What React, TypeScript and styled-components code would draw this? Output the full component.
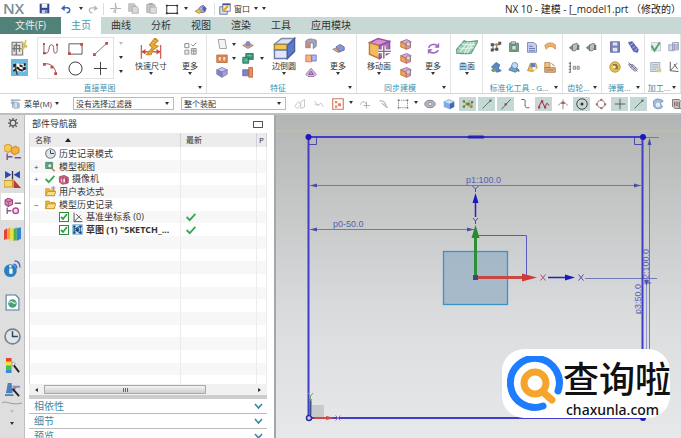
import React, { ReactNode } from 'react';
import styled, { createGlobalStyle, css } from 'styled-components';

const uiFont = '"Open Sans", "Noto Sans CJK SC", sans-serif';

const GlobalStyle = createGlobalStyle`
  * { box-sizing: border-box; }
  body { margin: 0; background: #fff; }
  button, select { font: inherit; color: inherit; }
`;

/* ---------- icon drawings, all on a 16 x 16 grid ---------- */

const line = (d: string, stroke: string, w = 1.2) => (
  <path d={d} fill="none" stroke={stroke} strokeWidth={w} />
);
const shape = (d: string, fill: string, stroke = 'none') => (
  <path d={d} fill={fill} stroke={stroke} />
);
const isoBox = (top: string, left: string, right: string) => (
  <>
    {shape('M1 5 8 2l7 3-7 3z', top, '#7a7aa8')}
    {shape('M1 5v6l7 4V8z', left, '#7a7aa8')}
    {shape('M15 5v6l-7 4V8z', right, '#7a7aa8')}
  </>
);

const art: Record<string, ReactNode> = {
  save: <>{shape('M1 1h14v14H1z', '#36468c')}{shape('M4 1h8v6H4z', '#eef1fa')}{shape('M4 10h8v5H4z', '#c4cbe6')}{shape('M9 11h2v3H9z', '#36468c')}</>,
  undo: <>{line('M4 6h6c3 0 4 2 4 4s-2 4-5 4', '#3b68b5', 2.2)}{shape('M0 7 6 1v10z', '#3b68b5')}</>,
  redo: <>{line('M12 6H6c-3 0-4 2-4 4s2 4 5 4', '#b9b9b9', 2)}{shape('M16 7 10 2v9z', '#b9b9b9')}</>,
  cut: <>{line('M8 0v15M0 8h16', '#b4b4b4', 1.8)}{line('M5 14 10 5', '#c4c4c4', 2)}</>,
  copy: <>{shape('M1 1h8l2 3v8H1z', '#c9c9c9', '#a9a9a9')}{shape('M6 5h7l2 3v7H6z', '#d9d9d9', '#a2a2a2')}</>,
  paste: <>{shape('M1 2h12v12H1z', '#c4c4c4', '#a9a9a9')}{shape('M4 0h6v3H4z', '#a9a9a9')}{shape('M6 6h9v9H6z', '#dcdcdc', '#a9a9a9')}</>,
  rectTool: <>{line('M2 4h12v9H2z', '#444', 1.2)}{shape('M1 3h2v2H1zM13 3h2v2h-2zM1 12h2v2H1zM13 12h2v2h-2z', '#333')}</>,
  sweep: <>{shape('M3 11 7 5l4-2 4 4-2 5-5 1z', '#a9b0e2', '#54559b')}{shape('M0 11 5 8l4 3-3 3z', '#e3bd5b', '#a98a3a')}{shape('M10 4l5 3-2 5-3-3z', '#5361b4')}</>,
  window: <>{shape('M1 5h10v10H1z', '#d7dff5', '#4c5791')}{shape('M5 1h10v10H5z', '#f2f3fb', '#4c5791')}{line('M5 11 12 4', '#e0a920', 3)}{shape('M5 1h10v2H5z', '#4c5791')}</>,
  sketchNew: <>{shape('M1 3h10v12H1z', '#e6e6e4', '#777')}{line('M3 12V6h5v6M5 3v12M1 9h10', '#777')}{line('M9 10l6-4M10 3l5 5M14 1l-2 8', '#d9bd4a', 1.5)}</>,
  finish: <>{shape('M0 0h16v16H0z', '#6db9e4')}{shape('M2 5c4-3 7 2 12-1v7c-5 3-8-2-12 1z', '#fff')}{shape('M2 5 5 4v3l-3 1zM8 5l3 1v2L8 7zM5 7l3 1v3L5 9zM11 8l3-1v3l-3 1zM2 10l3-1v2l-3 1zM8 9l3 1v2l-3-1zM12 4l2 0v2l-2 1z', '#222')}{line('M3 5 6 15', '#333')}</>,
  profile: <>{line('M1 3v10M3 13c5 0 2-9 6-9s1 9 4 9 2-4 2-9', '#8b5050', 1)}{shape('M0 2h2v2H0zM0 12h3v2H0zM14 3h2v2h-2z', '#b03a36')}</>,
  rectangle: <>{line('M1 3h14v11H1z', '#555', 1)}{shape('M0 12h3v3H0zM13 2h3v3h-3z', '#bd4f47')}</>,
  lineTool: <>{line('M2 14 14 3', '#777', 1)}{shape('M0 13h3v3H0zM13 1h3v3h-3z', '#bd4f47')}</>,
  arc: <>{line('M1 3c8-1 12 4 13 11', '#8b5050', 1)}{shape('M0 2h3v3H0zM8 5h3v3H8zM12 12h3v3h-3z', '#bd4f47')}</>,
  circle: <circle cx="8" cy="8" r="7" fill="none" stroke="#333" />,
  plus: line('M8 1v14M1 8h14', '#3b3b3b', 1),
  dimension: <>{line('M1 5v10M15 5v10M1 10h14', '#d0655e', 1)}{shape('M1 10l3-2v4zM15 10l-3-2v4z', '#d0453f')}{shape('M5 12 9 7 7 5l4-5 2 2-3 3 3 1-4 3-1 3z', '#edb145', '#cf8e2b')}</>,
  more: <>{line('M1 2h5v5H1zM9 3l2 2 4-4', '#888')}{shape('M1 10h5v5H1zM9 8h6v7H9z', '#e8e8e8', '#888')}{line('M12 8v7M9 11h6', '#888', 1)}</>,
  plane: shape('M3 2h9l2 12H5z', '#f4f4f6', '#888'),
  extrude: <>{shape('M1 4h14v10H1z', '#e7935c', '#b65c2c')}{shape('M3 6h4v6H3zM9 6h4v6H9z', '#fae0bf', '#c36e3f')}</>,
  block: isoBox('#c6c3ee', '#8580c9', '#a49fdd'),
  hole: <>{shape('M1 10 8 6l7 4-7 4z', '#dba66b', '#8c7c91')}{shape('M5 7c0-4 6-4 6 0v4H5z', '#8487c8')}</>,
  unite: <>{shape('M5 2h10v8H5z', '#399477', '#1c6f56')}{shape('M1 7h8v8H1z', '#46a283', '#1c6f56')}{line('M7 5h6M4 11h3', '#9ad3bf')}</>,
  trim: <>{shape('M1 5h8v8H1z', '#7f83ce', '#555ba5')}{shape('M9 2h5v13H9z', '#e89056', '#b65c2c')}</>,
  blend: <>{shape('M1 5 6 1h9l-5 5H1z', '#d8e1f5', '#7d8aa8')}{shape('M1 5h9v4H1z', '#f1c64b', '#9f8740')}{shape('M1 9h9v6H1z', '#dfe7f8', '#6b7cad')}{shape('M10 6 15 1v9l-5 5z', '#5c7bcb', '#4a63a5')}</>,
  draft: <>{shape('M1 4c4-4 9-3 14-1v8l-4 3V7L7 6v7H1z', '#a5a3bd', '#74728e')}{shape('M2 6h4v6H2z', '#d08a68')}</>,
  shell: <>{shape('M1 4h8v9H1z', '#f2b186', '#d8683b')}{shape('M9 4h6v8H9z', '#b5bce8', '#6167b5')}</>,
  offset: <>{shape('M1 11 8 3l7 8-3 3H4z', '#dab5dd', '#8d6199')}{line('M5 11 8 7l3 4z', '#6d4b83')}</>,
  feature: <>{shape('M1 9 8 6l7 3-7 4z', '#e2a35c', '#8a7a87')}{shape('M5 6l5-3 5 3v4l-6 2z', '#8995d3', '#5c66a5')}</>,
  moveFace: <>{shape('M1 4 7 1l8 2-7 3z', '#d88fd6', '#9155a0')}{shape('M1 4v8l7 3V6z', '#f2bd62', '#c07b39')}{shape('M15 3v8l-7 4V6z', '#b56dc2', '#8c4f9e')}{line('M7 10h9M11 6v9', '#fff', 2.5)}{line('M7 10h9M11 6v9', '#777', 1)}</>,
  face: <>{shape('M1 5 9 2l6 3-6 4z', '#dfa4df', '#9155a0')}{shape('M1 5v7l8 3V9z', '#f1a252', '#b76a33')}{shape('M8 8l6-2v7l-6 2z', '#ef9e91', '#a05379')}<circle cx="11" cy="8" r="3" fill="#d8d4d4" stroke="#777" /></>,
  swap: <>{line('M2 7c2-5 8-5 11-2M14 10c-2 4-8 4-11 2', '#a06bc0', 2)}{shape('M15 1v6H9zM1 15V9h6z', '#a06bc0')}</>,
  surface: <>{shape('M0 9 6 2c3 2 6 0 10 0l-5 9C7 12 5 11 0 11z', '#9fd1b8', '#6c9f88')}{line('M2 7c4 2 7 0 11 0M4 4c4 2 6 0 10 1M6 11l5-8M3 10 9 3M8 11l5-8', '#e1f4ea', 0.8)}</>,
  grid: <>{line('M3 5h10M3 11h8M4 3v10M9 3v10', '#555')}{shape('M1 3h4v4H1zM1 10h4v4H1zM7 9h4v4H7zM11 1h4v4h-4z', '#555')}{shape('M7 3h3v3H7z', '#d9824d')}</>,
  cylinder: <>{shape('M2 3h12v11H2z', '#7fa18f', '#55746a')}{shape('M4 1h6v3H4zM5 6h6v6H5z', '#cfe2d7', '#55746a')}</>,
  list: <>{shape('M2 2h8l4 3v10H2z', '#c6cdea', '#6a72a5')}{line('M4 7h5M4 10h8M4 13h8', '#5f74b0')}</>,
  ribbonIc: shape('M1 6c4-5 10-4 14-1v6l-3-3C8 6 5 8 3 11z', '#f1b16c', '#c58347'),
  partBlue: <>{shape('M2 8l6-6 5 3-2 5 4 3-6 2z', '#5c86c8', '#395d9e')}{shape('M1 12l6-3 2 4-5 2z', '#6fa06b')}</>,
  searchPart: <>{shape('M1 12 7 4l7 8-4 3z', '#72a1b8', '#4b7189')}<circle cx="9" cy="6" r="4" fill="#c5ddf3" stroke="#4c7eb3" />{line('M12 10l3 4', '#4c7eb3', 2)}</>,
  partGold: <>{shape('M2 13 6 3h7l2 6-6 5z', '#edbb56', '#b08432')}{shape('M6 3h6v5H6z', '#6280c0')}<circle cx="11" cy="10" r="2" fill="#fff" /></>,
  tableIc: <>{shape('M1 2h7v7H1z', '#f1bf71', '#b57f3c')}{shape('M1 9h14v6H1z', '#e0c08a', '#a0593f')}{line('M3 12h10', '#a0593f')}{line('M10 3l4 4', '#a0593f')}</>,
  gears: <>{shape('M1 9l5-4v8z', '#7b8787')}{shape('M6 5l6-2 2 4-4 6H6z', '#b6c2be', '#596663')}{shape('M12 5h3v7h-3z', '#66786f')}</>,
  gearMesh: <>{line('M3 1v14M1 3h3M1 7h3M1 11h3M1 15h3', '#666')}{shape('M7 7h3v4H7zM12 7h3v4h-3z', '#dedede', '#777')}</>,
  spring: <>{shape('M2 1h12v14H2z', '#7b83bd', '#565d98')}{shape('M5 2h6v4H5zM5 9h6v5H5z', '#e0e4f6')}</>,
  springDiag: <>{shape('M2 2l5-1 8 10-1 4-5-1z', '#656bbf', '#484e96')}{line('M4 6l4-3M7 10l4-4M10 13l4-3', '#b9bdea')}</>,
  springGold: <><circle cx="8" cy="8" r="7" fill="#e5c253" stroke="#a88a2c" />{shape('M5 4h5l2 3v4H6z', '#8a7947')}<circle cx="7" cy="8" r="2" fill="#fff2bd" /></>,
  springOff: <>{shape('M2 4l6 1 6 6-3 3-7-6z', '#c8c8d7', '#777790')}{line('M5 9l4-4M8 12l4-4M2 2l12 12', '#717193')}</>,
  check: <>{shape('M2 2h12v11H2z', '#ebe8f5', '#c2b9d5')}{line('M2 6l4 7 7-11', '#4aa764', 2.5)}</>,
  sheets: <>{shape('M1 5h7v8H1zM6 2h8v10H6z', '#d5d8e9', '#8e93ae')}{line('M9 4v7M12 4v7', '#8890b2')}</>,
  notebook: <>{shape('M1 2h12v12H1z', '#dce3ec', '#8f98a9')}{line('M3 5h8M3 8h8M3 11h5', '#9aa2b2')}{shape('M9 10h6v5H9z', '#d3cf91')}</>,
  axis: <>{line('M3 1v12l11 1M3 13 12 3M8 4l5 7', '#4f5350')}</>,
  menu: <>{line('M1 3h14M1 7h5M4 3v11', '#91a5ba', 2)}{shape('M6 6h5v9H6z', '#d9e2ec', '#8297ad')}{line('M13 7v8', '#91a5ba', 2)}</>,
  ghostA: <>{line('M1 11l5-6 3 4-4 5zM9 5l5-3v10l-5 2z', '#c4c4c4')}</>,
  ghostB: line('M2 4l5 6M6 10l5-3 3 5M2 8l6 2', '#c4c4c4'),
  snapBox: <>{line('M1 1h14v14H1z', '#d87558', 1.5)}{shape('M4 4h3v3H4zM8 7h4v4H8zM4 10h3v3H4z', '#e0836a')}</>,
  ghostC: <>{line('M2 9c1-6 8-5 8 1M6 10h9M10 5v9', '#ababab')}</>,
  ghostD: <>{line('M2 4c6-1 9 3 9 9M5 7l8 6', '#b5b5b5', 1.5)}</>,
  marquee: <><path d="M2 3h12v10H2z" fill="none" stroke="#777" strokeDasharray="2 1" />{shape('M1 2h2v2H1zM13 2h2v2h-2zM1 12h2v2H1zM13 12h2v2h-2z', '#666')}</>,
  lens: <><ellipse cx="8" cy="8" rx="7" ry="5" fill="#b9b9c5" stroke="#6a6a7c" /><ellipse cx="8" cy="8" rx="3" ry="2" fill="#efefef" stroke="#777" /></>,
  cube: <>{shape('M1 5 8 2l7 3-6 3z', '#c9dffa', '#8aafe0')}{shape('M1 5v7l8 3V8z', '#81a9e4')}{shape('M15 5v7l-6 3V8z', '#3e68b8')}</>,
  points: <>{line('M2 4l4 4-4 4M6 8h8', '#7b8a3b')}{shape('M1 3h3v3H1zM1 10h3v3H1zM6 6h4v4H6zM12 4h3v3h-3zM11 10h3v3h-3z', '#6d7a35')}{shape('M9 9h3v3H9zM9 3h2v2H9z', '#d9913b')}</>,
  segEnd: <>{line('M2 14 13 3', '#4d6e62')}{shape('M11 2h3v3h-3z', '#4d7e68')}</>,
  segMid: <>{line('M2 15 14 2', '#5b4d54')}{shape('M6 7h3v3H6z', '#8e4b55')}</>,
  hook: line('M3 2h4c3 1-1 10 3 11h4', '#555'),
  pole: <>{line('M1 12 5 4l4 8 3-5 3 3', '#a63a56', 1.4)}{shape('M0 11h3v3H0zM4 3h3v3H4zM8 11h3v3H8z', '#a63a56')}</>,
  cross: <>{line('M8 2v13M2 10c2-5 10-5 12 0', '#8d7777')}{shape('M6 5h4v3H6z', '#a35757')}</>,
  center: <><circle cx="8" cy="8" r="7" fill="none" stroke="#444" strokeWidth="1.3" /><circle cx="8" cy="8" r="2" fill="#333" /></>,
  quadrant: <><circle cx="8" cy="8" r="5" fill="none" stroke="#8b6c6c" />{shape('M7 1h3v3H7zM7 12h3v3H7zM1 7h3v3H1zM12 7h3v3h-3z', '#b07070')}</>,
  faceSnap: <>{shape('M2 4c4-4 9-3 13 0l-4 3 3 5c-4 4-12 3-12-3z', '#a4badc', '#6683b1')}<circle cx="8" cy="9" r="3" fill="#e7edf7" /></>,
  mesh: <>{shape('M2 2h9l3 3v9H5L2 11z', '#d0c4c4', '#6b5b5b')}{line('M5 5v6M8 5v6M11 5v8', '#5b4b4b')}</>,
  gear: <><circle cx="8" cy="8" r="4.5" fill="none" stroke="#555" strokeWidth="2" /><path d="M8 0v3M8 13v3M0 8h3M13 8h3M2 2l2 2M12 12l2 2M14 2l-2 2M2 14l2-2" stroke="#555" strokeWidth="2" /></>,
  assembly: <>{shape('M0 2l4-2 3 2v4L4 8 0 6z', '#f7c95a', '#d29a2b')}{shape('M7 4l4-2 3 2v4l-4 2-3-2z', '#f0b43b', '#c88f25')}{line('M3 9v6M3 12h5M10 13h6', '#74528e', 1.3)}</>,
  constraint: <>{shape('M1 0v7l6-3.500zM15 0v7L9 3.500z', '#2b46b8')}{line('M8 0v8', '#333')}{shape('M0 9h8v6H0z', '#f4d66c', '#bd9a39')}{shape('M9 8l7 8H9z', '#c0363c')}</>,
  partNav: <>{shape('M1 2l3-2 4 2v4L4 8 1 6z', '#d78dba', '#a4447f')}{line('M1 2l3 2 4-2M4 4v4', '#a4447f', 1)}{line('M10 5h6M3 9v6M3 12h4', '#8a608a', 1.3)}<circle cx="11" cy="12" r="2.6" fill="#f3dded" stroke="#b04f91" strokeWidth="1.4" /></>,
  books: <>{shape('M0 5 3 3v10l-3 1z', '#e0443a')}{shape('M3 4l3-2v11l-3 1z', '#f3a32d')}{shape('M6 4l3-2v12l-3 1z', '#f1df3b')}{shape('M9 4l3-2v12l-3 1z', '#47b649')}{shape('M12 3l4-1v11l-4 2z', '#2e86cf')}</>,
  info: <><circle cx="6" cy="10" r="6" fill="#2d7fc1" />{shape('M5 8h3v5H5zM5 5h2v2H5z', '#fff')}{line('M9 4c2 0 3 2 3 4M10 1c4 0 5 3 5 6', '#496eaf', 1.3)}</>,
  web: <>{shape('M2 1h9l3 3v11H2z', '#fff', '#4b7c92')}<circle cx="8" cy="9" r="4" fill="#4c9e79" />{line('M5 8c3-3 4 3 6 0', '#cfe9e0')}</>,
  clock: <><circle cx="8" cy="8" r="7" fill="#dfe6ee" stroke="#7b828b" strokeWidth="1.6" />{line('M8 3v5h5', '#34404c', 1.4)}</>,
  rainbow: <>{shape('M1 0h6v4H1z', '#e7432f')}{shape('M1 4h6v4H1z', '#f0df36')}{shape('M1 8h6v4H1z', '#46bd58')}{shape('M1 12h6v4H1z', '#348bd6')}{line('M8 6l7 9', '#222', 2)}{shape('M7 4l4 2-3 3z', '#fff', '#999')}</>,
  roles: <>{shape('M1 12 3 1h4l1 11zM0 13h9v2H0z', '#4b80b8')}{line('M8 5h8M12 5l-4 5', '#8e87b7', 2)}{line('M8 7l7 8', '#222', 2)}</>,
  views: <>{shape('M1 2h10v9H1z', '#5aae86', '#2d7958')}<circle cx="7" cy="7" r="3" fill="#d6efe3" stroke="#2d7958" />{line('M9 10l5 5', '#c9703d', 2)}</>,
  tick: line('M1 8l5 5 9-10', '#34a853', 3),
  camera: <>{shape('M2 4 9 2l6 3v8l-8 2-5-3z', '#d4607a', '#8e3650')}{shape('M5 7h5v5H5z', '#fff')}{line('M7 5v7M12 6v6', '#7a3a6a', 1.5)}</>,
  folder: <>{shape('M1 3h5l2 2h6v9H1z', '#f1b93c', '#b98319')}{shape('M4 7h12l-3 7H1z', '#fbdc83', '#b98319')}</>,
  folderFx: <>{shape('M1 4h5l2 2h6v8H1z', '#f1b93c', '#b98319')}{shape('M4 8h12l-3 6H1z', '#fbdc83', '#b98319')}{line('M9 3h6M12 0v6', '#8a6fb0')}</>,
  csys: line('M3 1v13h12M3 14l9-9M6 3l8 8', '#444', 1.3),
  sketch: <>{shape('M1 1h14v14H1z', '#cfe4f4', '#5b9bd0')}{line('M3 13V3M3 8l9-5M3 8l9 5M12 3v10', '#27639c', 1.5)}{shape('M2 2h3v3H2zM11 2h3v3h-3zM2 11h3v3H2zM11 11h3v3h-3zM6 6h4v4H6z', '#1b3f66')}</>,
};

const Svg = styled.svg<{ $size: number }>`
  display: block;
  flex: none;
  width: ${(p) => p.$size}px;
  height: ${(p) => p.$size}px;
`;
const Icon = ({ name, size = 12 }: { name: string; size?: number }) => (
  <Svg $size={size} viewBox="0 0 16 16" aria-hidden="true">{art[name]}</Svg>
);

/* ---------- shared parts ---------- */

const App = styled.div`
  display: flex;
  flex-direction: column;
  height: 100vh;
  overflow: hidden;
  background: #fff;
  color: #333;
  font: 9px/12px ${uiFont};
  white-space: nowrap;
`;

const PlainButton = styled.button`
  display: flex;
  flex: none;
  align-items: center;
  justify-content: center;
  padding: 0;
  border: 0;
  background: none;
`;
const ToolButton = styled(PlainButton)<{ $w?: number; $h?: number; $on?: boolean }>`
  width: ${(p) => p.$w ?? 18}px;
  height: ${(p) => p.$h ?? 14}px;
  background: ${(p) => (p.$on ? '#c6d8d5' : 'none')};
`;
const CaretShape = styled.span<{ $faint?: boolean }>`
  flex: none;
  border: 2px solid transparent;
  border-top: 3px solid ${(p) => (p.$faint ? '#bbb' : '#333')};
  border-bottom: 0;
`;
const CaretButton = styled(PlainButton)`
  width: 6px;
  height: 12px;
`;
const Caret = ({ label, faint }: { label: string; faint?: boolean }) => (
  <CaretButton aria-label={label}><CaretShape $faint={faint} /></CaretButton>
);
const Tool = ({ icon, label, w, h, size, on }: { icon: string; label: string; w?: number; h?: number; size?: number; on?: boolean }) => (
  <ToolButton aria-label={label} $w={w} $h={h} $on={on}><Icon name={icon} size={size} /></ToolButton>
);
const Separator = styled.span`
  flex: none;
  width: 1px;
  height: 12px;
  margin: 0 1px;
  background: #ddd;
`;

/* ---------- title bar and tabs ---------- */

const TitleBar = styled.header`
  display: flex;
  flex: none;
  align-items: center;
  height: 17px;
`;
const Brand = styled.span`
  flex: none;
  width: 34px;
  padding-left: 3px;
  color: #7b8b97;
  font: 600 15px/17px "Open Sans", sans-serif;
`;
const WindowMenu = styled(PlainButton)`
  gap: 4px;
  font-size: 8px;
`;
const DocumentTitle = styled.h1`
  flex: 1;
  margin: 0;
  font: 10px/14px ${uiFont};
  color: #222;
  text-align: right;
`;
const Tabs = styled.nav`
  display: flex;
  flex: none;
  height: 17px;
  background: #c8d8d5;
`;
const Tab = styled.button<{ $kind?: 'file' | 'active' }>`
  padding: 0 10px;
  border: 0;
  background: none;
  font-size: 10px;
  line-height: 17px;
  color: #333;
  ${(p) => p.$kind === 'file' && css`width: 61px; background: #50827a; color: #e9f2f0;`}
  ${(p) => p.$kind === 'active' && css`background: #fff; color: #3a9bb5;`}
`;

/* ---------- ribbon ---------- */

const Ribbon = styled.section`
  display: flex;
  flex: none;
  height: 60px;
  border-bottom: 1px solid #d5d5d5;
`;
const Group = styled.div<{ $w?: number }>`
  display: flex;
  flex-direction: column;
  flex: ${(p) => (p.$w ? `0 0 ${p.$w}px` : '1 0 0')};
  min-width: 0;
  overflow: hidden;
  border-right: 1px solid #e2e2e2;
`;
const GroupTools = styled.div<{ $left?: number }>`
  display: flex;
  flex: 1;
  padding: 3px 0 0 ${(p) => p.$left ?? 4}px;
`;
const GroupLabel = styled.div`
  display: flex;
  align-items: center;
  height: 12px;
  padding: 0 4px 0 1px;
  color: #3b91b3;
  font-size: 8px;
  line-height: 11px;
  span:first-child { flex: 1; text-align: center; }
`;
const Stack = styled.div<{ $rows: number }>`
  display: grid;
  flex: none;
  align-content: start;
  grid-template-rows: repeat(${(p) => p.$rows}, ${(p) => (p.$rows === 3 ? 14 : 20)}px);
  grid-auto-flow: column;
  align-items: center;
`;
const Gallery = styled.div`
  display: grid;
  flex: none;
  grid-template-columns: repeat(3, 25px);
  grid-template-rows: 20px 20px;
  align-items: center;
  height: 42px;
  margin-left: 8px;
  border: 1px solid #e2e2e2;
`;
const GalleryScroll = styled.div`
  display: flex;
  flex-direction: column;
  align-items: center;
  justify-content: space-between;
  width: 13px;
  height: 40px;
`;
const BigButton = styled(PlainButton)<{ $w: number }>`
  flex-direction: column;
  justify-content: flex-start;
  width: ${(p) => p.$w}px;
  height: 44px;
  font-size: 8px;
`;
const BigArt = styled.span`
  display: flex;
  align-items: center;
  height: 23px;
`;
const Big = ({ icon, label, w, size = 22 }: { icon: string; label: string; w: number; size?: number }) => (
  <BigButton $w={w}><BigArt><Icon name={icon} size={size} /></BigArt>{label}<CaretShape /></BigButton>
);
const Footer = ({ text }: { text: string }) => (
  <GroupLabel><span>{text}</span><CaretShape /></GroupLabel>
);

/* ---------- selection bar ---------- */

const SelectionBar = styled.div`
  display: flex;
  flex: none;
  align-items: center;
  gap: 2px;
  height: 19px;
  overflow: hidden;
`;
const MenuButton = styled(PlainButton)`
  gap: 3px;
  width: 66px;
  padding-left: 3px;
  font-size: 8px;
`;
const FilterBox = styled.span<{ $w: number }>`
  display: grid;
  flex: none;
  align-items: center;
  justify-items: end;
  width: ${(p) => p.$w}px;
  margin-left: 5px;
  select, ${CaretShape} { grid-area: 1 / 1; }
  ${CaretShape} { margin-right: 5px; pointer-events: none; }
`;
const FilterSelect = styled.select`
  width: 100%;
  height: 13px;
  padding: 0 10px 0 2px;
  border: 1px solid #bbb;
  border-radius: 0;
  appearance: none;
  background: #fff;
  font-size: 8px;
  line-height: 11px;
`;
const Filter = ({ label, value, w }: { label: string; value: string; w: number }) => (
  <FilterBox $w={w}>
    <FilterSelect aria-label={label} defaultValue={value}><option>{value}</option></FilterSelect>
    <CaretShape />
  </FilterBox>
);
const SnapTools = styled.div`
  display: flex;
  gap: 2px;
  margin-left: 3px;
`;

/* ---------- body ---------- */

const Body = styled.main`
  display: flex;
  flex: 1;
  min-height: 0;
  border-top: 2px solid #bcc0c0;
`;
const Rail = styled.nav`
  display: flex;
  flex: 0 0 25px;
  flex-direction: column;
  border-right: 1px solid #bdbdbd;
  background: #dedede;
`;
const RailButton = styled(PlainButton)<{ $h: number; $active?: boolean; $gap?: number }>`
  height: ${(p) => p.$h}px;
  margin-bottom: ${(p) => p.$gap ?? 0}px;
  margin-left: 1px;
  background: ${(p) => (p.$active ? '#fff' : 'none')};
`;
const RailEnd = styled.div`
  display: flex;
  flex-direction: column;
  align-items: center;
`;
const Panel = styled.aside`
  display: flex;
  flex: 0 0 249px;
  flex-direction: column;
  padding: 0 7px 0 4px;
  overflow: hidden;
  background: #fff;
`;
const PanelHeader = styled.div`
  display: flex;
  flex: none;
  align-items: center;
  justify-content: space-between;
  height: 18px;
  padding: 0 4px 0 3px;
`;
const PanelTitle = styled.h2`
  margin: 0;
  font-size: 9px;
  font-weight: 400;
`;
const PinButton = styled(PlainButton)`
  width: 10px;
  height: 7px;
  border: 1px solid #555;
`;
const TreeArea = styled.div`
  flex: 1;
  min-height: 0;
  overflow: hidden;
  border-left: 1px solid #ddd;
`;
const Tree = styled.table`
  width: 100%;
  border-collapse: collapse;
  table-layout: fixed;
  th {
    height: 14px;
    padding: 0 5px;
    border-right: 1px solid #d2d2d2;
    background: #ececec;
    font-size: 8px;
    font-weight: 400;
    line-height: 12px;
    text-align: left;
    overflow: hidden;
  }
  th:last-child { padding: 0 2px; }
  td {
    height: 13px;
    padding: 0;
    border-right: 1px solid #ececec;
    line-height: 12px;
    overflow: hidden;
  }
  tr:nth-child(3n) td { height: 12px; }
  tr:nth-child(even) td { background: #f7f7f7; }
`;
const Column = styled.col<{ $w?: number }>`
  width: ${(p) => (p.$w ? `${p.$w}px` : 'auto')};
`;
const SortHeader = styled.span`
  display: flex;
  align-items: center;
  gap: 14px;
`;
const SortMark = styled.span`
  border: 3px solid transparent;
  border-top: 0;
  border-bottom: 4px solid #222;
`;
const Node = styled.div<{ $depth: number; $bold?: boolean }>`
  display: flex;
  align-items: center;
  gap: 3px;
  height: 12px;
  padding-left: ${(p) => 4 + p.$depth * 27}px;
  font-weight: ${(p) => (p.$bold ? 700 : 400)};
`;
const Expander = styled.span`
  flex: none;
  width: 8px;
  color: #444;
  font-size: 8px;
  line-height: 10px;
`;
const Tick = styled.input`
  flex: none;
  width: 10px;
  height: 10px;
  margin: 0 0 0 -13px;
  border: 1px solid #2c8b3f;
  appearance: none;
  background: #fff;
  &:checked {
    background: #fff url("data:image/svg+xml,%3Csvg xmlns='http://www.w3.org/2000/svg' viewBox='0 0 8 8'%3E%3Cpath d='M1 4l2 2 4-5' fill='none' stroke='%232fa148' stroke-width='1.800'/%3E%3C/svg%3E") center / 8px 8px no-repeat;
  }
`;
const TickMark = styled.span`
  display: block;
  padding-left: 5px;
`;
const ScrollBar = styled.div`
  display: flex;
  flex: none;
  align-items: center;
  height: 11px;
  background: #f1f1f1;
`;
const ScrollArrow = styled(PlainButton)<{ $flip?: boolean }>`
  width: 15px;
  height: 11px;
  &::before {
    content: '';
    border: 2px solid transparent;
    ${(p) => (p.$flip ? 'border-left: 3px solid #333; border-right: 0;' : 'border-right: 3px solid #333; border-left: 0;')}
  }
`;
const ScrollTrack = styled.div`
  flex: 1;
`;
const ScrollThumb = styled.div`
  display: flex;
  align-items: center;
  justify-content: center;
  gap: 1px;
  width: 78%;
  height: 9px;
  border: 1px solid #a9a9a9;
  background: linear-gradient(#f3f3f3, #cfcfcf);
`;
const Grip = styled.span`
  width: 1px;
  height: 4px;
  background: #666;
`;
const Sections = styled.div`
  flex: none;
  height: 43px;
  overflow: hidden;
  border-top: 4px solid #cdcdcd;
`;
const SectionButton = styled.button`
  display: flex;
  align-items: center;
  justify-content: space-between;
  width: 100%;
  height: 15px;
  padding: 0 4px 0 5px;
  border: 0;
  border-bottom: 1px solid #bbb;
  background: #fff;
  color: #3b87a5;
  font-size: 10px;
  line-height: 14px;
`;
const Canvas = styled.section`
  position: relative;
  flex: 1;
  min-width: 0;
  border-left: 2px solid #a4a6a8;
  background: linear-gradient(#b3b5b5, #c3c5c5 25%, #dcdddf 65%, #e7e8ea);
`;
const Drawing = styled.svg`
  display: block;
  width: 100%;
  height: 100%;
  text {
    font: 9px "Liberation Sans Narrow", "Liberation Sans", sans-serif;
    fill: #5460b4;
  }
`;
const Watermark = styled.div`
  position: absolute;
  right: 11px;
  bottom: 20px;
  display: flex;
  align-items: center;
  width: 168px;
  height: 69px;
  padding-left: 5px;
  border-radius: 22px;
  background: #fff;
  color: #111;
`;
const MarkLogo = styled.svg`
  flex: none;
  width: 56px;
  height: 56px;
`;
const MarkText = styled.div`
  display: flex;
  flex-direction: column;
`;
const MarkName = styled.strong`
  font: 500 36px/52px "Noto Sans CJK SC", sans-serif;
`;
const MarkSite = styled.span`
  padding-left: 3px;
  font: 500 14px/14px "Noto Sans", sans-serif;
`;

/* ---------- data ---------- */

type TreeRow = { label: string; icon: string; depth: number; mark?: string; tick?: boolean; box?: boolean; bold?: boolean };
const rows: TreeRow[] = [
  { label: '历史记录模式', icon: 'clock', depth: 0 },
  { label: '模型视图', icon: 'views', depth: 0, mark: '+' },
  { label: '摄像机', icon: 'camera', depth: 0, mark: '+', tick: true },
  { label: '用户表达式', icon: 'folderFx', depth: 0 },
  { label: '模型历史记录', icon: 'folder', depth: 0, mark: '−' },
  { label: '基准坐标系 (0)', icon: 'csys', depth: 1, box: true },
  { label: '草图 (1) "SKETCH_...', icon: 'sketch', depth: 1, box: true, bold: true },
];
const blankRows = Array.from({ length: 12 }, (_, i) => i);

const rail: { icon: string; label: string; h: number; gap?: number; size?: number; active?: boolean }[] = [
  { icon: 'gear', label: '设置', h: 15, gap: 9, size: 10 },
  { icon: 'assembly', label: '装配导航器', h: 27 },
  { icon: 'constraint', label: '约束导航器', h: 27 },
  { icon: 'partNav', label: '部件导航器', h: 27, active: true },
  { icon: 'books', label: '重用库', h: 27, gap: 4 },
  { icon: 'info', label: 'HD3D 工具', h: 34 },
  { icon: 'web', label: 'Web 浏览器', h: 34 },
  { icon: 'clock', label: '历史记录', h: 34 },
  { icon: 'rainbow', label: '系统材料', h: 24, size: 15 },
  { icon: 'roles', label: '角色', h: 24, size: 15 },
];

const snapTools: { icon: string; label: string; on?: boolean }[] = [
  { icon: 'lens', label: '着色' }, { icon: 'cube', label: '实体' },
  { icon: 'points', label: '启用捕捉点', on: true }, { icon: 'segEnd', label: '端点', on: true },
  { icon: 'segMid', label: '中点', on: true }, { icon: 'hook', label: '控制点' },
  { icon: 'pole', label: '极点', on: true }, { icon: 'cross', label: '交点' },
  { icon: 'center', label: '圆弧中心', on: true }, { icon: 'quadrant', label: '象限点' },
  { icon: 'plus', label: '现有点', on: true }, { icon: 'segEnd', label: '曲线上的点', on: true },
  { icon: 'faceSnap', label: '面上的点' }, { icon: 'mesh', label: '有界栅格' },
];

const ChevronDown = () => (
  <Svg $size={9} viewBox="0 0 9 9" aria-hidden="true"><path d="M1 2l3.500 4L8 2" fill="none" stroke="#3b87a5" strokeWidth="1.6" /></Svg>
);

const SketchView = () => (
  <Drawing viewBox="276 115 405 323" preserveAspectRatio="xMidYMid meet" role="img" aria-label="草图">
    <path d="M276 131h405" stroke="#c4c2a8" strokeWidth="1" />
    <rect x="443.500" y="251.500" width="64" height="53" fill="#8eabc2" fillOpacity=".65" stroke="#3c93c6" strokeWidth="1.300" />
    <g fill="none" stroke="#7079b8" strokeWidth="1">
      <path d="M310 185.500h331M310 229.500h164M585 278.500h72M643 137.500h16M649.500 139v279" />
      <path d="M646.500 281v137" stroke="#8d95c9" />
      <path d="M478 235.500h48.500V275" stroke="#5a5ac2" />
    </g>
    <path d="M310 185.500l7-2v4zM641 185.500l-7-2v4zM310 229.500l7-2v4zM474 229.500l-7-2v4zM649.500 138l-2 7h4zM646.500 286l-2-6h4z" fill="#4651a3" />
    <g fill="none" stroke="#423cc6" strokeWidth="2">
      <path d="M308.500 137H643M308.500 137v281M642.500 137v281M308 418h335" />
    </g>
    <path d="M469 137h14" stroke="#2620b4" strokeWidth="3" strokeLinecap="round" />
    <path d="M309 144.500h7.500V138M642 144.500h-7.500V138" fill="none" stroke="#4848a8" />
    <g fill="#1c18c0">
      <circle cx="308.500" cy="137" r="3" /><circle cx="643" cy="137" r="3" /><circle cx="643" cy="418" r="3" />
    </g>
    <circle cx="309" cy="418" r="2.500" fill="#cfd3ef" stroke="#2930a0" strokeWidth="1.500" />
    <path d="M475.500 217v-15M548 277.500h18" stroke="#2822b8" strokeWidth="1.500" />
    <path d="M475.500 193l-3 10h6zM575 277.500l-10-3v6z" fill="#1c18c0" />
    <path d="M472.500 186l3 3 3-3M475.500 189v3M473 218l2.500 3 2.500-3M475.500 221v3M578.500 274.500l5 6M583.500 274.500l-5 6" fill="none" stroke="#4a46b8" />
    <path d="M475.500 278v-40" stroke="#2f8f37" strokeWidth="3" />
    <path d="M475.500 225l-4 13h8z" fill="#2a8a33" />
    <path d="M476 277.500h50" stroke="#c84844" strokeWidth="3" />
    <path d="M537 277.500l-15-4v8z" fill="#cf3a36" />
    <path d="M540.500 274.500l5 6M545.500 274.500l-5 6" stroke="#b04a78" />
    <rect x="473" y="275" width="5" height="5" fill="#3c4a78" />
    <rect x="312" y="405" width="12" height="12" fill="#bfc3c5" fillOpacity=".8" />
    <path d="M310.500 415v-16" stroke="#36508e" strokeWidth="2" />
    <path d="M308 393l2.500 3 2.500-3M310.500 396v5" fill="none" stroke="#69a86d" />
    <path d="M314 418h15" stroke="#cc4a4a" strokeWidth="2" />
    <path d="M335 418l-9-2v4z" fill="#cc4a4a" />
    <path d="M335.500 415.500l5 5M340.500 415.500l-5 5" stroke="#a376b0" />
    <text x="466" y="183">p1:100.0</text>
    <text x="333" y="227">p0-50.0</text>
    <text transform="translate(649 284) rotate(-90)">p2:100.0</text>
    <text transform="translate(641 314) rotate(-90)">p3:50.0</text>
  </Drawing>
);

export default function NxWindow() {
  return (
    <App>
      <GlobalStyle />
      <TitleBar>
        <Brand>NX</Brand>
        <Tool icon="save" label="保存" w={20} size={11} />
        <Tool icon="undo" label="撤消" w={24} size={10} />
        <Caret label="撤消列表" />
        <Tool icon="redo" label="重做" size={10} />
        <Separator />
        <Tool icon="cut" label="剪切" w={20} size={11} />
        <Tool icon="copy" label="复制" w={16} size={11} />
        <Tool icon="paste" label="粘贴" w={20} size={11} />
        <Tool icon="rectTool" label="矩形" w={22} size={14} />
        <Caret label="矩形列表" />
        <Tool icon="sweep" label="特征" w={24} />
        <Separator />
        <Tool icon="window" label="切换窗口" />
        <WindowMenu>窗口<CaretShape /><CaretShape /></WindowMenu>
        <DocumentTitle>NX 10 - 建模 - [_model1.prt （修改的）</DocumentTitle>
      </TitleBar>

      <Tabs>
        <Tab $kind="file">文件(F)</Tab>
        <Tab $kind="active">主页</Tab>
        {['曲线', '分析', '视图', '渲染', '工具', '应用模块'].map((t) => <Tab key={t}>{t}</Tab>)}
      </Tabs>

      <Ribbon>
        <Group $w={207}>
          <GroupTools $left={9}>
            <Stack $rows={2}>
              <Tool icon="sketchNew" label="草图" w={20} h={18} size={17} />
              <Tool icon="finish" label="完成草图" w={20} h={18} size={17} />
            </Stack>
            <Gallery>
              {[['profile', '轮廓'], ['rectangle', '矩形'], ['lineTool', '直线'], ['arc', '圆弧'], ['circle', '圆'], ['plus', '点']].map(([i, l]) => (
                <Tool key={i} icon={i} label={l} w={24} h={18} size={15} />
              ))}
            </Gallery>
            <GalleryScroll>
              <Caret label="上一行" faint /><Caret label="下一行" /><Caret label="展开" />
            </GalleryScroll>
            <Big icon="dimension" label="快速尺寸" w={48} />
            <Big icon="more" label="更多" w={30} size={13} />
          </GroupTools>
          <Footer text="直接草图" />
        </Group>

        <Group $w={150}>
          <GroupTools $left={6}>
            <Stack $rows={3}>
              <Tool icon="plane" label="基准平面" /><Tool icon="extrude" label="拉伸" /><Tool icon="block" label="块" />
            </Stack>
            <Stack $rows={3}><Caret label="基准列表" /><Caret label="拉伸列表" /></Stack>
            <Stack $rows={3}>
              <Tool icon="hole" label="孔" w={22} /><Tool icon="unite" label="合并" w={22} /><Tool icon="trim" label="修剪体" w={22} />
            </Stack>
            <Stack $rows={3}><span /><Caret label="布尔列表" /></Stack>
            <Big icon="blend" label="边倒圆" w={38} size={23} />
            <Stack $rows={3}>
              <Tool icon="draft" label="拔模" w={16} /><Tool icon="shell" label="抽壳" w={16} /><Tool icon="offset" label="偏置" w={16} />
            </Stack>
            <Big icon="feature" label="更多" w={38} size={13} />
          </GroupTools>
          <Footer text="特征" />
        </Group>

        <Group $w={94}>
          <GroupTools>
            <Big icon="moveFace" label="移动面" w={36} size={23} />
            <Stack $rows={3}>
              <Tool icon="face" label="替换面" /><Tool icon="face" label="偏置区域" /><Tool icon="face" label="删除面" />
            </Stack>
            <Big icon="swap" label="更多" w={36} size={13} />
          </GroupTools>
          <Footer text="同步建模" />
        </Group>

        <Group $w={32}>
          <GroupTools>
            <Big icon="surface" label="曲面" w={24} />
          </GroupTools>
        </Group>

        <Group $w={80}>
          <GroupTools>
            <Stack $rows={2}>
              {['grid', 'partBlue', 'cylinder', 'searchPart', 'list', 'partGold', 'ribbonIc', 'tableIc'].map((i) => (
                <Tool key={i} icon={i} label={i} />
              ))}
            </Stack>
          </GroupTools>
          <Footer text="标准化工具 - G..." />
        </Group>

        <Group $w={39}>
          <GroupTools $left={2}>
            <Stack $rows={2}>
              <Tool icon="gears" label="齿轮建模" w={17} /><Tool icon="gearMesh" label="齿轮啮合" w={17} />
              <Tool icon="gears" label="锥齿轮" w={17} />
            </Stack>
          </GroupTools>
          <Footer text="齿轮..." />
        </Group>

        <Group $w={43}>
          <GroupTools>
            <Stack $rows={2}>
              <Tool icon="spring" label="圆柱压缩弹簧" /><Tool icon="springGold" label="碟簧" />
              <Tool icon="springDiag" label="拉伸弹簧" /><Tool icon="springOff" label="删除弹簧" />
            </Stack>
          </GroupTools>
          <Footer text="弹簧..." />
        </Group>

        <Group>
          <GroupTools $left={2}>
            <Stack $rows={2}>
              <Tool icon="check" label="检查" /><Tool icon="notebook" label="加工表" />
              <Tool icon="sheets" label="图纸" /><Tool icon="axis" label="坐标" />
            </Stack>
          </GroupTools>
          <Footer text="加工..." />
        </Group>
      </Ribbon>

      <SelectionBar>
        <MenuButton><Icon name="menu" size={11} />菜单(M)<CaretShape /></MenuButton>
        <Filter w={101} label="选择过滤器" value="没有选择过滤器" />
        <Filter w={105} label="选择范围" value="整个装配" />
        <SnapTools>
          <Tool icon="ghostA" label="重置过滤器" w={17} />
          <Tool icon="ghostB" label="取消选择" w={17} />
          <Tool icon="snapBox" label="选择意图" w={17} />
          <Caret label="选择意图列表" />
          <Tool icon="ghostC" label="在相交处停止" w={17} />
          <Tool icon="ghostD" label="跟随圆角" w={17} />
          <Tool icon="marquee" label="框选" w={17} />
          <Caret label="框选列表" />
          {snapTools.map((t) => <Tool key={t.label} icon={t.icon} label={t.label} on={t.on} w={17} />)}
        </SnapTools>
      </SelectionBar>

      <Body>
        <Rail>
          {rail.map((r) => (
            <RailButton key={r.label} aria-label={r.label} $h={r.h} $gap={r.gap} $active={r.active}>
              <Icon name={r.icon} size={r.size ?? 17} />
            </RailButton>
          ))}
          <RailEnd>
            <svg width="22" height="4" viewBox="0 0 22 4" aria-hidden="true"><path d="M1 2c5-3 8 3 20 0" fill="none" stroke="#999" /></svg>
            <Caret label="向上滚动" faint />
            <Caret label="向下滚动" />
          </RailEnd>
        </Rail>

        <Panel>
          <PanelHeader>
            <PanelTitle>部件导航器</PanelTitle>
            <PinButton aria-label="最大化" />
          </PanelHeader>
          <TreeArea>
            <Tree>
              <colgroup><Column /><Column $w={76} /><Column $w={10} /></colgroup>
              <thead>
                <tr><th><SortHeader>名称<SortMark /></SortHeader></th><th>最新</th><th>P</th></tr>
              </thead>
              <tbody>
                {rows.map((r) => (
                  <tr key={r.label}>
                    <td>
                      <Node $depth={r.depth} $bold={r.bold}>
                        <Expander>{r.mark}</Expander>
                        {r.box && <Tick type="checkbox" defaultChecked aria-label={r.label} />}
                        {r.tick && <Icon name="tick" size={10} />}
                        <Icon name={r.icon} size={11} />
                        {r.label}
                      </Node>
                    </td>
                    <td>{r.box && <TickMark><Icon name="tick" size={10} /></TickMark>}</td>
                    <td />
                  </tr>
                ))}
                {blankRows.map((i) => <tr key={i}><td /><td /><td /></tr>)}
              </tbody>
            </Tree>
          </TreeArea>
          <ScrollBar>
            <ScrollArrow aria-label="向左滚动" />
            <ScrollTrack><ScrollThumb><Grip /><Grip /><Grip /></ScrollThumb></ScrollTrack>
            <ScrollArrow aria-label="向右滚动" $flip />
          </ScrollBar>
          <Sections>
            {['相依性', '细节', '预览'].map((s) => (
              <SectionButton key={s}>{s}<ChevronDown /></SectionButton>
            ))}
          </Sections>
        </Panel>

        <Canvas>
          <SketchView />
          <Watermark>
            <MarkLogo viewBox="0 0 56 56" aria-hidden="true">
              <path d="M51 35A24.500 24.500 0 1 0 36 50" fill="none" stroke="#1e7cff" strokeWidth="7" strokeLinecap="round" />
              <circle cx="28" cy="27" r="11" fill="none" stroke="#f6a52c" strokeWidth="7" />
              <path d="M37 37l8 7" stroke="#f6a52c" strokeWidth="7" strokeLinecap="round" />
            </MarkLogo>
            <MarkText>
              <MarkName>查询啦</MarkName>
              <MarkSite>chaxunla.com</MarkSite>
            </MarkText>
          </Watermark>
        </Canvas>
      </Body>
    </App>
  );
}
